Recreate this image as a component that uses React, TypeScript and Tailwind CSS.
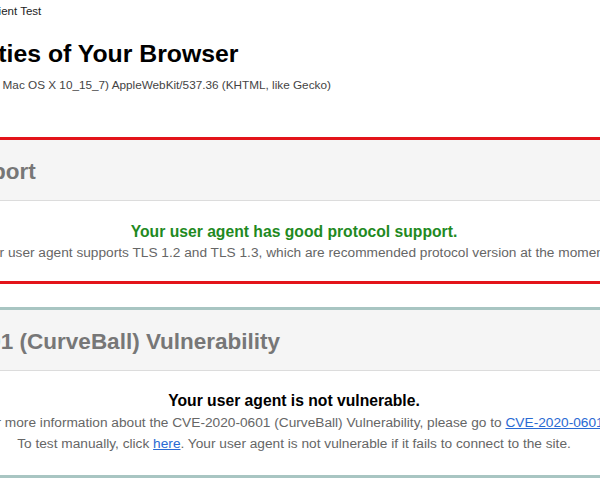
export default function App() {
  return (
    <div
      className="w-[600px] h-[480px] overflow-hidden bg-white text-[#333]"
      style={{ fontFamily: '"Liberation Sans", Arial, Helvetica, sans-serif' }}
    >
      <div className="ml-[-208px] w-[1004px] whitespace-nowrap">
        {/* breadcrumb */}
        <div className="pt-[3px] pl-[1px] text-[11.5px] leading-[16px] text-[#222]">
          You are here: Home &gt; Projects &gt; SSL Client Test
        </div>

        {/* page title + user agent */}
        <h1 className="mt-[20px] pl-[1px] text-[24.8px] leading-[30px] font-bold text-black">
          SSL/TLS Capabilities of Your Browser
        </h1>
        <div className="mt-[8px] ml-[-3px] text-[11.75px] leading-[16px] text-[#444]">
          User Agent: Mozilla/5.0 (Macintosh; Intel Mac OS X 10_15_7) AppleWebKit/537.36 (KHTML, like Gecko)
        </div>

        {/* protocol support */}
        <section className="mt-[44px] border-y-[3px] border-[#e3141a]">
          <div className="bg-[#f5f5f5] border-b border-[#dcdcdc] pl-[60px] pt-[18px] pb-[14px]">
            <h2 className="text-[22.5px] leading-[28px] font-bold text-[#777]">Protocol Support</h2>
          </div>
          <div className="bg-white pt-[21px] pb-[18px] text-center">
            <div className="text-[15.7px] leading-[20px] font-bold text-[#1f8a1f]">
              Your user agent has good protocol support.
            </div>
            <div className="text-[13.7px] leading-[21px] text-[#666]">
              Your user agent supports TLS 1.2 and TLS 1.3, which are recommended protocol version at the moment.
            </div>
          </div>
        </section>

        {/* CurveBall */}
        <section className="mt-[23px] border-y-[3px] border-[#a8c5c2]">
          <div className="bg-[#f5f5f5] border-b border-[#dcdcdc] pl-[60px] pt-[18px] pb-[14px]">
            <h2 className="text-[22.5px] leading-[28px] font-bold text-[#777]">
              CVE-2020-0601 (CurveBall) Vulnerability
            </h2>
          </div>
          <div className="bg-white pt-[20px] pb-[21px] text-center">
            <div className="text-[15.7px] leading-[20px] font-bold text-black">
              Your user agent is not vulnerable.
            </div>
            <div className="mt-[1px] text-[13.7px] leading-[21px] text-[#666]">
              For more information about the CVE-2020-0601 (CurveBall) Vulnerability, please go to{" "}
              <a href="#" className="text-[#2a6ad3] underline">CVE-2020-0601</a>.
            </div>
            <div className="text-[13.7px] leading-[21px] text-[#666]">
              To test manually, click{" "}
              <a href="#" className="text-[#2a6ad3] underline">here</a>. Your user agent is not vulnerable if it fails to
              connect to the site.
            </div>
          </div>
        </section>
      </div>
    </div>
  );
}
